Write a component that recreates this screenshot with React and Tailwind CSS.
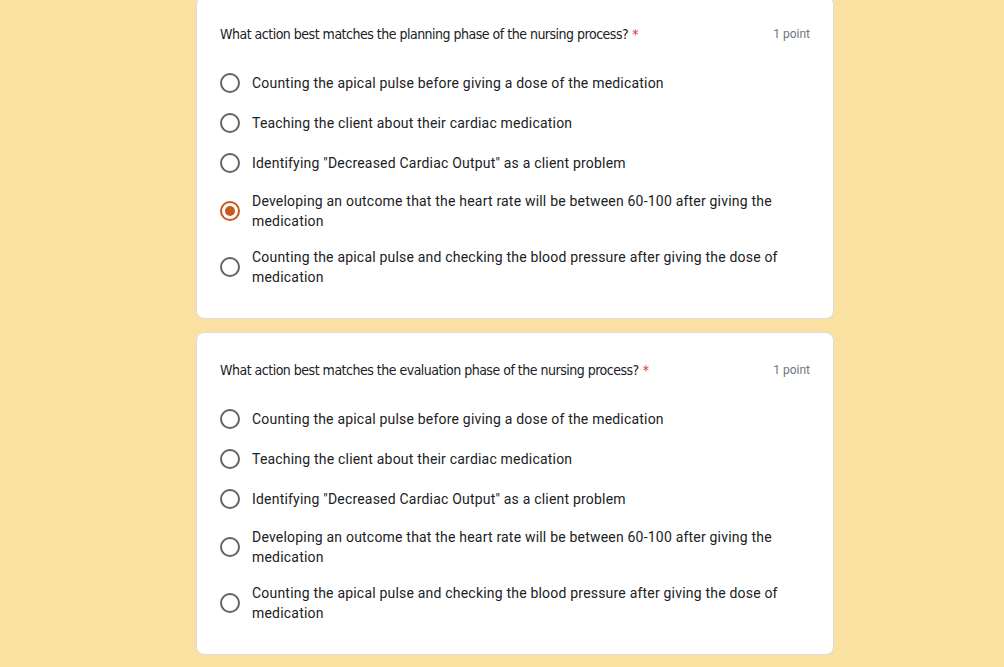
import React, { useState } from 'react';

const OPTIONS = [
  'Counting the apical pulse before giving a dose of the medication',
  'Teaching the client about their cardiac medication',
  'Identifying "Decreased Cardiac Output" as a client problem',
  'Developing an outcome that the heart rate will be between 60-100 after giving the medication',
  'Counting the apical pulse and checking the blood pressure after giving the dose of medication',
];

const QUESTIONS = [
  { id: 'q1', title: 'What action best matches the planning phase of the nursing process?', initial: 3 },
  { id: 'q2', title: 'What action best matches the evaluation phase of the nursing process?', initial: null },
];

const Radio = ({ checked }) => (
  <div className="flex h-6 w-5 shrink-0 items-center justify-center">
    <div
      className={`flex h-5 w-5 items-center justify-center rounded-full border-2 ${
        checked ? 'border-[#c8591c]' : 'border-[#5f6368]'
      }`}
    >
      {checked && <div className="h-[10px] w-[10px] rounded-full bg-[#c8591c]" />}
    </div>
  </div>
);

const QuestionCard = ({ q }) => {
  const [value, setValue] = useState(q.initial);
  return (
    <div className="rounded-lg border border-[#dadce0] bg-white px-[23px] pb-[23px] pt-[25px]">
      <div className="mb-[17px] flex items-start justify-between">
        <div
          className="text-[14px] leading-6 tracking-[-0.5px] text-[#202124]"
          style={{ fontFamily: '"Liberation Sans Narrow", "DejaVu Sans Condensed", Roboto, sans-serif' }}
        >
          {q.title}
          <span className="ml-1 text-[#d93025]">*</span>
        </div>
        <div className="pl-4 text-xs leading-6 text-[#70757a]">1 point</div>
      </div>
      <div className="flex flex-col">
        {OPTIONS.map((opt, i) => (
          <label
            key={i}
            onClick={() => setValue(i)}
            className="flex cursor-pointer items-center gap-3 py-2"
          >
            <Radio checked={value === i} />
            <span className="max-w-[558px] text-sm leading-5 tracking-[0.2px] text-[#202124]">{opt}</span>
          </label>
        ))}
      </div>
    </div>
  );
}

export default function App() {
  return (
    <div
      className="min-h-screen overflow-hidden bg-[#fae1a1]"
      style={{ fontFamily: 'Roboto, "Liberation Sans", Arial, sans-serif' }}
    >
      <div className="-mt-1 ml-[196px] flex w-[638px] flex-col gap-[13px] pb-6">
        {QUESTIONS.map((q) => (
          <QuestionCard key={q.id} q={q} />
        ))}
      </div>
    </div>
  );
}
